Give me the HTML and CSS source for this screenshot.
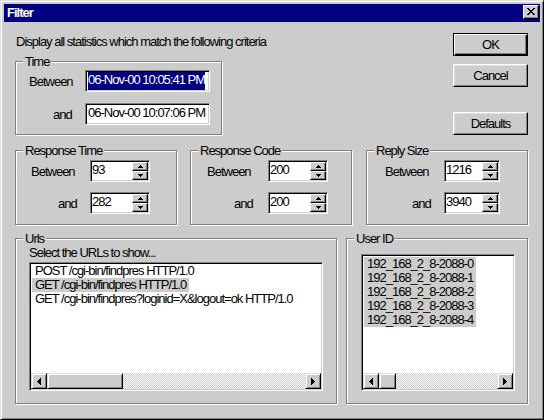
FILE: index.html
```html
<!DOCTYPE html>
<html>
<head>
<meta charset="utf-8">
<title>Filter</title>
<link rel="stylesheet" href="styles.css">
</head>
<body>
<div class="window">
  <div class="titlebar">
    <span class="title">Filter</span>
    <button class="close" aria-label="Close">
      <svg width="8" height="7" viewBox="0 0 8 7" shape-rendering="crispEdges"><path fill="#000" d="M0 0h2v1H0zM6 0h2v1H6zM1 1h2v1H1zM5 1h2v1H5zM2 2h4v1H2zM3 3h2v1H3zM2 4h4v1H2zM1 5h2v1H1zM5 5h2v1H5zM0 6h2v1H0zM6 6h2v1H6z"/></svg>
    </button>
  </div>
  <div class="content">
    <div class="top">
      <div class="top-left">
        <p class="desc">Display all statistics which match the following criteria</p>
        <div class="group g-time">
          <span class="legend">Time</span>
          <div class="rows rows-time">
            <span class="lbl">Between</span>
            <div class="field time"><span class="sel">06-Nov-00 10:05:41 PM</span></div>
            <span class="lbl and and-time">and</span>
            <div class="field time"><span>06-Nov-00 10:07:06 PM</span></div>
          </div>
        </div>
      </div>
      <div class="buttons">
        <button class="btn default">OK</button>
        <button class="btn cancel">Cancel</button>
        <button class="btn defaults">Defaults</button>
      </div>
    </div>

    <div class="mid">
      <div class="group g-mid">
        <span class="legend">Response Time</span>
        <div class="rows rows-rt">
          <span class="lbl">Between</span>
          <div class="field spin"><span class="val">93</span>
            <div class="spinner">
              <span class="sb"><svg width="5" height="3" viewBox="0 0 5 3" shape-rendering="crispEdges"><path fill="#000" d="M2 0h1v1H2zM1 1h3v1H1zM0 2h5v1H0z"/></svg></span>
              <span class="sb"><svg width="5" height="3" viewBox="0 0 5 3" shape-rendering="crispEdges"><path fill="#000" d="M0 0h5v1H0zM1 1h3v1H1zM2 2h1v1H2z"/></svg></span>
            </div>
          </div>
          <span class="lbl and">and</span>
          <div class="field spin"><span class="val">282</span>
            <div class="spinner">
              <span class="sb"><svg width="5" height="3" viewBox="0 0 5 3" shape-rendering="crispEdges"><path fill="#000" d="M2 0h1v1H2zM1 1h3v1H1zM0 2h5v1H0z"/></svg></span>
              <span class="sb"><svg width="5" height="3" viewBox="0 0 5 3" shape-rendering="crispEdges"><path fill="#000" d="M0 0h5v1H0zM1 1h3v1H1zM2 2h1v1H2z"/></svg></span>
            </div>
          </div>
        </div>
      </div>

      <div class="group g-mid g-rc">
        <span class="legend">Response Code</span>
        <div class="rows rows-rc">
          <span class="lbl">Between</span>
          <div class="field spin"><span class="val">200</span>
            <div class="spinner">
              <span class="sb"><svg width="5" height="3" viewBox="0 0 5 3" shape-rendering="crispEdges"><path fill="#000" d="M2 0h1v1H2zM1 1h3v1H1zM0 2h5v1H0z"/></svg></span>
              <span class="sb"><svg width="5" height="3" viewBox="0 0 5 3" shape-rendering="crispEdges"><path fill="#000" d="M0 0h5v1H0zM1 1h3v1H1zM2 2h1v1H2z"/></svg></span>
            </div>
          </div>
          <span class="lbl and">and</span>
          <div class="field spin"><span class="val">200</span>
            <div class="spinner">
              <span class="sb"><svg width="5" height="3" viewBox="0 0 5 3" shape-rendering="crispEdges"><path fill="#000" d="M2 0h1v1H2zM1 1h3v1H1zM0 2h5v1H0z"/></svg></span>
              <span class="sb"><svg width="5" height="3" viewBox="0 0 5 3" shape-rendering="crispEdges"><path fill="#000" d="M0 0h5v1H0zM1 1h3v1H1zM2 2h1v1H2z"/></svg></span>
            </div>
          </div>
        </div>
      </div>

      <div class="group g-mid g-rs">
        <span class="legend">Reply Size</span>
        <div class="rows rows-rs">
          <span class="lbl">Between</span>
          <div class="field spin narrow"><span class="val">1216</span>
            <div class="spinner">
              <span class="sb"><svg width="5" height="3" viewBox="0 0 5 3" shape-rendering="crispEdges"><path fill="#000" d="M2 0h1v1H2zM1 1h3v1H1zM0 2h5v1H0z"/></svg></span>
              <span class="sb"><svg width="5" height="3" viewBox="0 0 5 3" shape-rendering="crispEdges"><path fill="#000" d="M0 0h5v1H0zM1 1h3v1H1zM2 2h1v1H2z"/></svg></span>
            </div>
          </div>
          <span class="lbl and">and</span>
          <div class="field spin narrow"><span class="val">3940</span>
            <div class="spinner">
              <span class="sb"><svg width="5" height="3" viewBox="0 0 5 3" shape-rendering="crispEdges"><path fill="#000" d="M2 0h1v1H2zM1 1h3v1H1zM0 2h5v1H0z"/></svg></span>
              <span class="sb"><svg width="5" height="3" viewBox="0 0 5 3" shape-rendering="crispEdges"><path fill="#000" d="M0 0h5v1H0zM1 1h3v1H1zM2 2h1v1H2z"/></svg></span>
            </div>
          </div>
        </div>
      </div>
    </div>

    <div class="bottom">
      <div class="group g-urls">
        <span class="legend">Urls</span>
        <p class="hint">Select the URLs to show...</p>
        <div class="listbox lb-urls">
          <div class="items">
            <span class="item">POST /cgi-bin/findpres HTTP/1.0</span>
            <span class="item hl">GET /cgi-bin/findpres HTTP/1.0</span>
            <span class="item">GET /cgi-bin/findpres?loginid=X&amp;logout=ok HTTP/1.0</span>
          </div>
          <div class="hscroll">
            <span class="arrow"><svg width="4" height="7" viewBox="0 0 4 7" shape-rendering="crispEdges"><path fill="#000" d="M0 3h1v1H0zM1 2h1v3H1zM2 1h1v5H2zM3 0h1v7H3z"/></svg></span>
            <span class="thumb thumb-urls"></span>
            <span class="track"></span>
            <span class="arrow"><svg width="4" height="7" viewBox="0 0 4 7" shape-rendering="crispEdges"><path fill="#000" d="M0 0h1v7H0zM1 1h1v5H1zM2 2h1v3H2zM3 3h1v1H3z"/></svg></span>
          </div>
        </div>
      </div>

      <div class="group g-user">
        <span class="legend">User ID</span>
        <div class="listbox lb-user">
          <div class="items items-user">
            <span class="item hl">192_168_2_8-2088-0</span>
            <span class="item hl">192_168_2_8-2088-1</span>
            <span class="item hl">192_168_2_8-2088-2</span>
            <span class="item hl">192_168_2_8-2088-3</span>
            <span class="item hl">192_168_2_8-2088-4</span>
          </div>
          <div class="hscroll">
            <span class="arrow"><svg width="4" height="7" viewBox="0 0 4 7" shape-rendering="crispEdges"><path fill="#000" d="M0 3h1v1H0zM1 2h1v3H1zM2 1h1v5H2zM3 0h1v7H3z"/></svg></span>
            <span class="thumb thumb-user"></span>
            <span class="track"></span>
            <span class="arrow"><svg width="4" height="7" viewBox="0 0 4 7" shape-rendering="crispEdges"><path fill="#000" d="M0 0h1v7H0zM1 1h1v5H1zM2 2h1v3H2zM3 3h1v1H3z"/></svg></span>
          </div>
        </div>
      </div>
    </div>
  </div>
</div>
</body>
</html>
```

FILE: styles.css
```css
* {
  box-sizing: border-box;
  margin: 0;
  padding: 0;
}

html, body {
  width: 544px;
  height: 420px;
  overflow: hidden;
  background: #cccccc;
}

body {
  font-family: "Liberation Sans", Arial, sans-serif;
  font-size: 13px;
  letter-spacing: -1px;
  color: #000;
}

.window {
  width: 544px;
  height: 420px;
  background: #cccccc;
  border: 1px solid;
  border-color: #dfdfdf #000 #000 #dfdfdf;
  box-shadow: inset 1px 1px #fff, inset -1px -1px #808080;
  padding: 3px;
  display: flex;
  flex-direction: column;
}

/* title bar */
.titlebar {
  height: 18px;
  flex: none;
  background: #000080;
  display: flex;
  align-items: flex-start;
  justify-content: space-between;
  padding: 0 1px 0 3px;
}

.title {
  color: #fff;
  font-weight: bold;
  line-height: 18px;
}

.close {
  width: 16px;
  height: 14px;
  margin-top: 1px;
  background: #cccccc;
  border: 1px solid;
  border-color: #fff #000 #000 #fff;
  box-shadow: inset -1px -1px #808080;
  display: flex;
  align-items: center;
  justify-content: center;
  padding: 0 0 1px 0;
}

.close svg {
  display: block;
}

/* content */
.content {
  display: flex;
  flex-direction: column;
  padding: 0 12px 0 11px;
}

.top {
  display: flex;
  justify-content: space-between;
}

.top-left {
  width: 207px;
}

.desc {
  margin-top: 12px;
  padding-left: 1px;
  line-height: 15px;
  white-space: nowrap;
}

/* group boxes */
.group {
  position: relative;
  border: 1px solid #808080;
  box-shadow: 1px 1px 0 #fff, inset 1px 1px 0 #fff;
}

.legend {
  position: absolute;
  top: -7px;
  left: 7px;
  padding: 0 2px;
  line-height: 13px;
  background: #cccccc;
  white-space: nowrap;
}

.g-time {
  margin-top: 12px;
  width: 207px;
  height: 74px;
}

.rows {
  display: grid;
  align-items: center;
}

.lbl {
  line-height: 15px;
  white-space: nowrap;
}

.rows-time {
  grid-template-columns: 56px 125px;
  row-gap: 11px;
  padding: 8px 0 0 13px;
}

.and {
  padding-left: 27px;
}

.and-time {
  padding-left: 24px;
}

/* edit fields */
.field {
  height: 22px;
  background: #fff;
  border: 1px solid;
  border-color: #808080 #fff #fff #808080;
  box-shadow: inset 1px 1px #000, inset -1px -1px #cccccc;
  padding: 1px 1px 1px 2px;
  line-height: 16px;
  white-space: nowrap;
  display: flex;
  overflow: hidden;
}

.field.time {
  width: 125px;
}

.sel {
  background: #000080;
  color: #fff;
}

.field.spin {
  width: 60px;
  padding-left: 1px;
}

.field.spin.narrow {
  width: 56px;
}

.val {
  flex: 1;
}

.spinner {
  width: 16px;
  height: 18px;
  display: flex;
  flex-direction: column;
}

.sb {
  height: 9px;
  background: #cccccc;
  border: 1px solid;
  border-color: #fff #000 #000 #fff;
  box-shadow: inset -1px -1px #808080;
  display: flex;
  align-items: center;
  justify-content: center;
}

.sb svg {
  display: block;
}

/* buttons */
.buttons {
  width: 75px;
  display: flex;
  flex-direction: column;
  padding-top: 11px;
}

.btn {
  width: 75px;
  height: 23px;
  background: #cccccc;
  border: 1px solid;
  border-color: #fff #000 #000 #fff;
  box-shadow: inset -1px -1px #808080, inset 1px 1px #dfdfdf;
  font: inherit;
  letter-spacing: -1px;
  color: #000;
  padding: 0;
  line-height: 15px;
}

.btn.default {
  border-color: #000;
  box-shadow: inset 1px 1px #fff, inset -1px -1px #000, inset -2px -2px #808080;
}

.btn.cancel {
  margin-top: 8px;
}

.btn.defaults {
  margin-top: 25px;
}

/* middle row */
.mid {
  display: flex;
  margin-top: 15px;
}

.g-mid {
  width: 162px;
  height: 75px;
}

.g-rc {
  margin-left: 13px;
}

.g-rs {
  margin-left: 14px;
}

.rows-rt,
.rows-rc,
.rows-rs {
  row-gap: 10px;
  padding-top: 9px;
}

.rows-rt {
  grid-template-columns: 59px 60px;
  padding-left: 15px;
}

.rows-rc {
  grid-template-columns: 61px 60px;
  padding-left: 16px;
}

.rows-rs {
  grid-template-columns: 59px 56px;
  padding-left: 18px;
}

/* bottom row */
.bottom {
  display: flex;
  margin-top: 13px;
  gap: 9px;
}

.g-urls {
  width: 322px;
  height: 166px;
  padding: 7px 0 0 13px;
}

.g-user {
  width: 182px;
  height: 166px;
  padding: 15px 0 0 14px;
}

.hint {
  line-height: 13px;
  white-space: nowrap;
}

.listbox {
  background: #fff;
  border: 1px solid;
  border-color: #808080 #fff #fff #808080;
  box-shadow: inset 1px 1px #000, inset -1px -1px #cccccc;
  padding: 1px;
  display: flex;
  flex-direction: column;
  overflow: hidden;
}

.lb-urls {
  margin-top: 3px;
  width: 294px;
  height: 129px;
}

.lb-user {
  width: 154px;
  height: 137px;
}

.items {
  flex: 1;
  display: flex;
  flex-direction: column;
  align-items: flex-start;
  padding-left: 1px;
  overflow: hidden;
}

.items-user {
  padding-top: 1px;
}

.item {
  line-height: 14px;
  padding: 0 3px;
  white-space: nowrap;
}

.item.hl {
  background: #cccccc;
}

.hscroll {
  height: 16px;
  flex: none;
  display: flex;
}

.arrow,
.thumb {
  height: 16px;
  background: #cccccc;
  border: 1px solid;
  border-color: #dfdfdf #000 #000 #dfdfdf;
  box-shadow: inset 1px 1px #fff, inset -1px -1px #808080;
}

.arrow {
  width: 16px;
  display: flex;
  align-items: center;
  justify-content: center;
}

.arrow svg {
  display: block;
}

.thumb-urls {
  width: 76px;
}

.thumb-user {
  width: 17px;
}

.track {
  flex: 1;
  background-color: #fff;
  background-image: conic-gradient(#cccccc 25%, #fff 0 50%, #cccccc 0 75%, #fff 0);
  background-size: 2px 2px;
}
```
